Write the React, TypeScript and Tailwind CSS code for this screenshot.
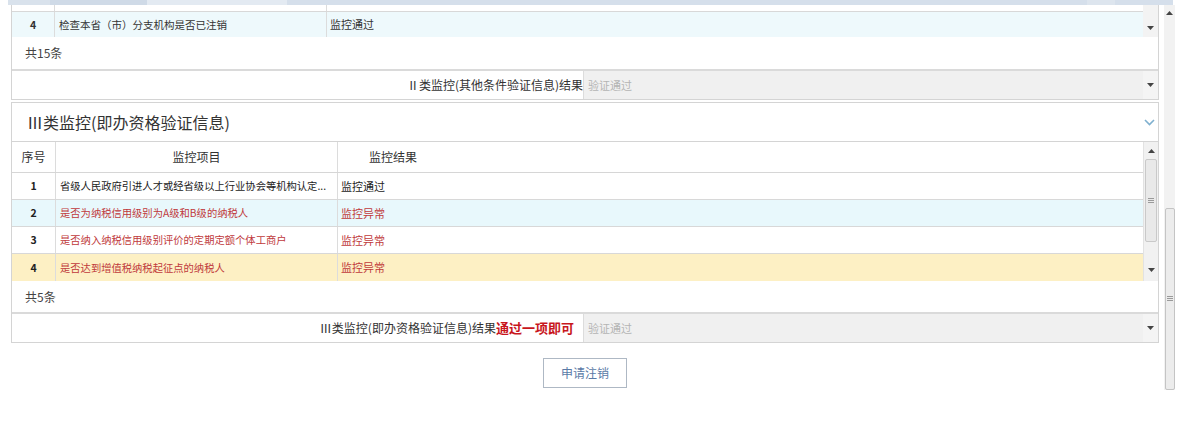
import React from "react";

// ── Small drawings ────────────────────────────────────────────────────────────

function Tri({ up = false, className = "" }: { up?: boolean; className?: string }) {
  return (
    <svg width="7" height="4" viewBox="0 0 7 4" className={className}>
      <polygon points={up ? "0,4 7,4 3.5,0" : "0,0 7,0 3.5,4"} fill="#444" />
    </svg>
  );
}

function Grip() {
  return (
    <svg width="6" height="6" viewBox="0 0 6 6">
      <path d="M0 0.5H6M0 2.5H6M0 4.5H6" stroke="#9a9a9a" strokeWidth="1" />
    </svg>
  );
}

function Chevron() {
  return (
    <svg width="11" height="7" viewBox="0 0 11 7">
      <polyline points="1,1 5.5,5.5 10,1" fill="none" stroke="#7fb0cf" strokeWidth="1.6" />
    </svg>
  );
}

// ── Result select row ─────────────────────────────────────────────────────────

function ResultRow({ children }: { children: React.ReactNode }) {
  return (
    <div className="flex h-[30px] border-t-2 border-[#dadada]">
      <div className="flex w-[571px] shrink-0 items-center justify-end text-[12px] text-[#333]">
        {children}
      </div>
      <div className="flex flex-1 items-center border-l border-[#dcdcdc] bg-[#f0f0f0]">
        <span className="flex-1 pl-[4px] text-[11px] text-[#b4b4b4]">验证通过</span>
        <div className="flex h-full w-[15px] items-center justify-center bg-[#f4f4f4]">
          <Tri />
        </div>
      </div>
    </div>
  );
}

// ── Table pieces ──────────────────────────────────────────────────────────────

type Row = { no: string; item: string; result: string; bg: string; red?: boolean };

const ROWS: Row[] = [
  { no: "1", item: "省级人民政府引进人才或经省级以上行业协会等机构认定...", result: "监控通过", bg: "bg-white" },
  { no: "2", item: "是否为纳税信用级别为A级和B级的纳税人", result: "监控异常", bg: "bg-[#e8f8fc]", red: true },
  { no: "3", item: "是否纳入纳税信用级别评价的定期定额个体工商户", result: "监控异常", bg: "bg-white", red: true },
  { no: "4", item: "是否达到增值税纳税起征点的纳税人", result: "监控异常", bg: "bg-[#fdf0c4]", red: true },
];

function InnerScrollbar() {
  return (
    <div className="flex w-[15px] shrink-0 flex-col items-center border-l border-[#e2e2e2] bg-[#f1f1f1]">
      <div className="flex h-[17px] items-center">
        <Tri up />
      </div>
      <div className="flex h-[83px] w-[12px] items-center justify-center rounded-[2px] border border-[#c9c9c9] bg-[#e9e9e9]">
        <Grip />
      </div>
      <div className="flex-1" />
      <div className="flex h-[22px] items-center">
        <Tri />
      </div>
    </div>
  );
}

export default function App() {
  return (
    <div className="relative h-[430px] w-[1200px] overflow-hidden bg-white font-['Noto_Sans_CJK_SC','Noto_Sans',sans-serif] text-[#333]">
      {/* tab strip remnant */}
      <div className="ml-[8px] flex h-[5px] w-[1165px]">
        <div className="w-[42px] bg-[#d9e2ec]" />
        <div className="w-[97px] bg-[#cfdae7]" />
        <div className="w-[140px] bg-[#e3eaf2]" />
        <div className="w-[800px] bg-[#d5dfeb]" />
        <div className="w-[28px] bg-[#dde5ee]" />
        <div className="flex-1 bg-[#d5dfeb]" />
      </div>

      <div className="flex">
        <div className="w-[1164px] shrink-0">
          {/* ── Section II remnant ── */}
          <div className="ml-[11px] w-[1148px] border-x border-b border-[#d4d4d4]">
            <div className="flex">
              <div className="flex-1">
                <div className="flex h-[7px] border-b border-[#d8d8d8]">
                  <div className="w-[43px] border-r border-[#dcdcdc]" />
                  <div className="w-[272px] border-r border-[#dcdcdc]" />
                </div>
                <div className="flex h-[25px] items-center bg-[#eef9fc] text-[10.5px]">
                  <div className="flex h-full w-[43px] items-center justify-center border-r border-[#dcdcdc] font-bold">4</div>
                  <div className="flex h-full w-[272px] items-center border-r border-[#dcdcdc] pl-[4px]">检查本省（市）分支机构是否已注销</div>
                  <div className="pl-[3px] text-[11px]">监控通过</div>
                </div>
              </div>
              <div className="flex w-[15px] shrink-0 flex-col items-center justify-end bg-[#f3f3f3] pb-[7px]">
                <Tri />
              </div>
            </div>
            <div className="flex h-[32px] items-center pl-[13px] text-[12px] text-[#444]">共15条</div>
            <ResultRow>Ⅱ类监控(其他条件验证信息)结果</ResultRow>
          </div>

          {/* ── Section III ── */}
          <div className="ml-[11px] mt-[2px] w-[1148px] border border-[#d4d4d4]">
            <div className="flex h-[39px] items-center justify-between border-b border-[#d4d4d4] pl-[15px] pr-[3px]">
              <span className="text-[16px] text-[#333]">Ⅲ类监控(即办资格验证信息)</span>
              <Chevron />
            </div>

            <div className="flex">
              <div className="flex-1">
                <div className="flex h-[31px] items-center border-b border-[#d6d6d6] text-[12px]">
                  <div className="flex h-full w-[44px] items-center justify-center border-r border-[#dcdcdc]">序号</div>
                  <div className="flex h-full w-[282px] items-center justify-center border-r border-[#dcdcdc]">监控项目</div>
                  <div className="pl-[31px]">监控结果</div>
                </div>
                {ROWS.map((r, i) => (
                  <div
                    key={r.no}
                    className={`flex h-[27px] items-center text-[10.3px] ${r.bg} ${i < ROWS.length - 1 ? "border-b border-[#d8d8d8]" : ""}`}
                  >
                    <div className="flex h-full w-[44px] items-center justify-center border-r border-[#dcdcdc] text-[10.5px] font-bold text-[#222]">{r.no}</div>
                    <div className={`flex h-full w-[282px] items-center whitespace-nowrap border-r border-[#dcdcdc] pl-[4px] ${r.red ? "text-[#c0393b]" : "text-[#222]"}`}>
                      {r.item}
                    </div>
                    <div className={`pl-[3px] text-[11px] ${r.red ? "text-[#c0393b]" : "text-[#222]"}`}>{r.result}</div>
                  </div>
                ))}
              </div>
              <InnerScrollbar />
            </div>

            <div className="flex h-[31px] items-center pl-[13px] text-[12px] text-[#444]">共5条</div>
            <ResultRow>
              Ⅲ类监控(即办资格验证信息)结果
              <b className="mr-[9px] text-[13px] text-[#c8161d]">通过一项即可</b>
            </ResultRow>
          </div>

          <div className="ml-[543px] mt-[15px] flex h-[30px] w-[84px] items-center justify-center border border-[#aeb8c4] text-[12px] text-[#5a7aa6]">
            申请注销
          </div>
        </div>

        {/* page scrollbar */}
        <div className="flex h-[385px] w-[11px] shrink-0 flex-col items-center bg-[#f2f2f2]">
          <div className="flex h-[16px] items-center">
            <Tri up />
          </div>
          <div className="flex-1" />
          <div className="flex h-[182px] w-[10px] items-center justify-center rounded-[2px] border border-[#c4c4c4] bg-[#ececec]">
            <Grip />
          </div>
        </div>
      </div>
    </div>
  );
}
